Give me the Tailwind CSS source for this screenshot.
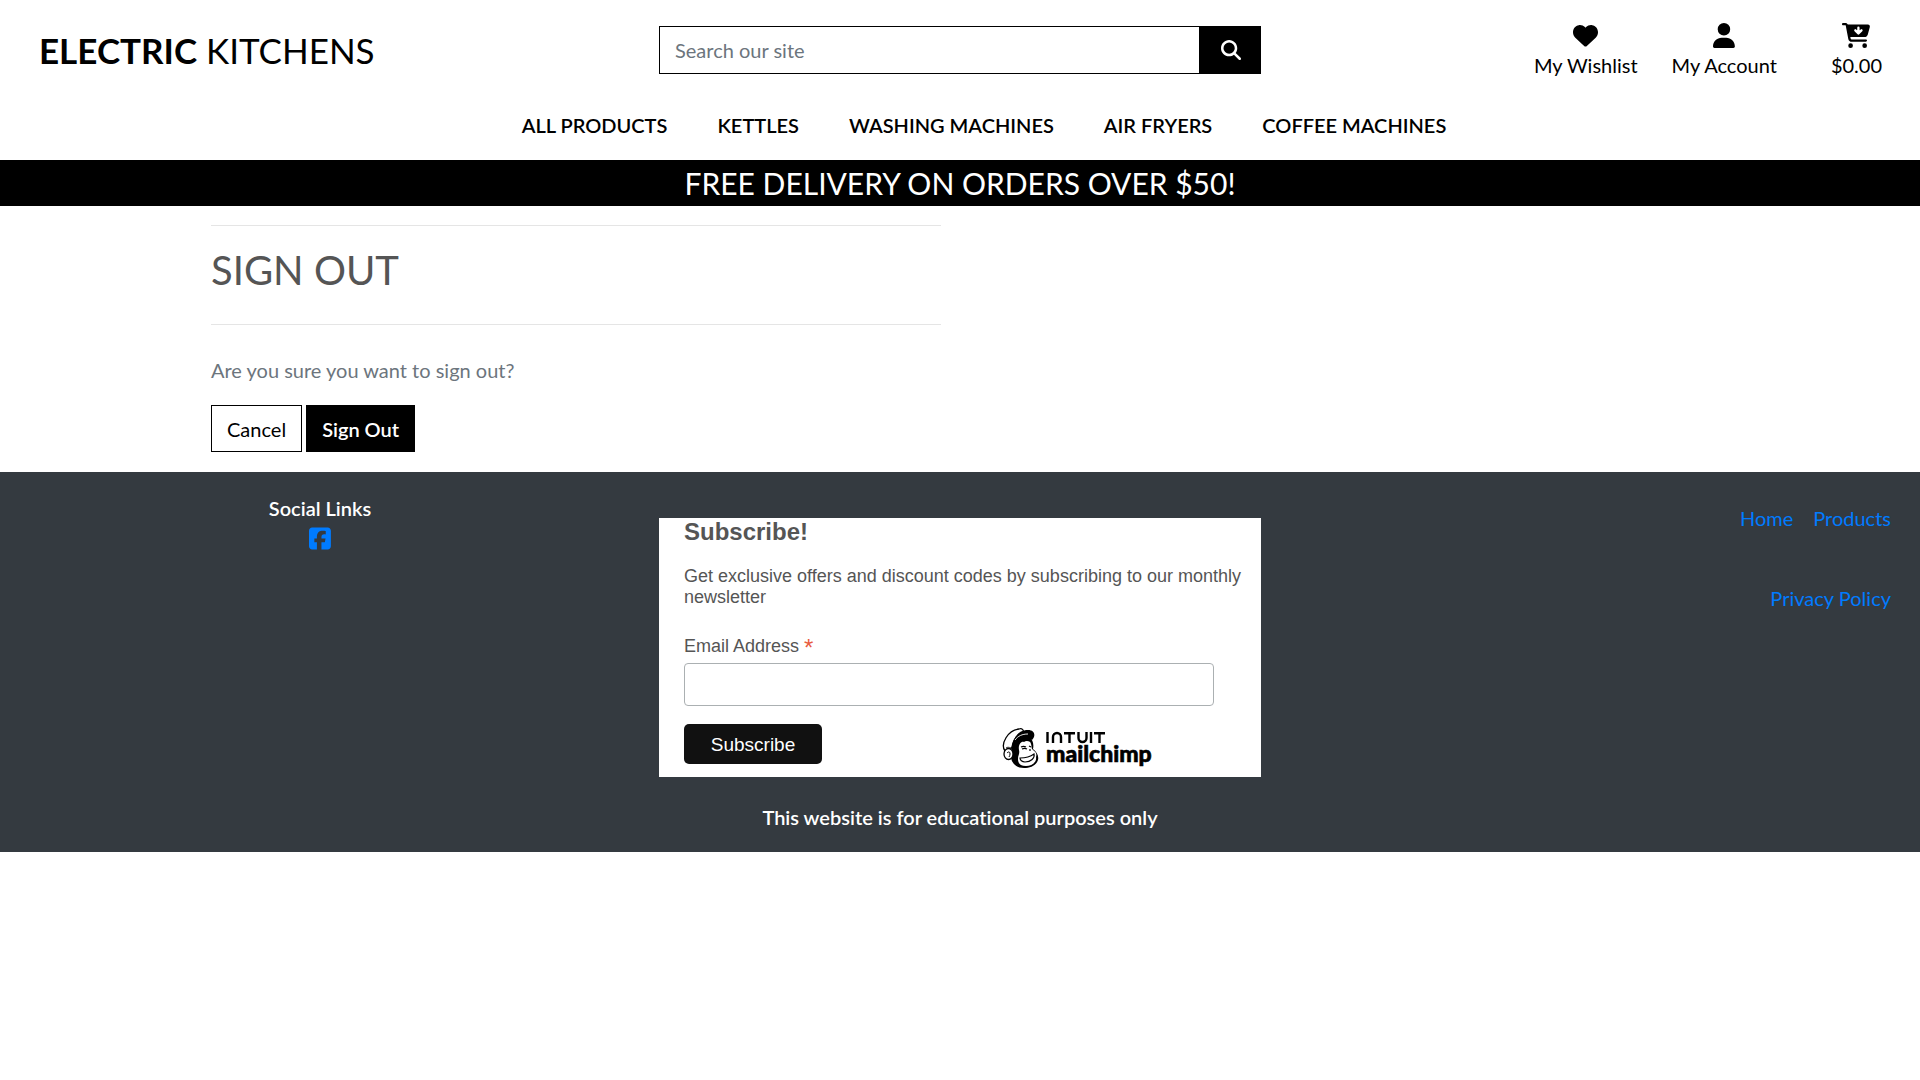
<!DOCTYPE html>
<html lang="en">
<head>
<meta charset="utf-8">
<meta name="viewport" content="width=device-width, initial-scale=1">
<title>Electric Kitchens</title>
<script src="https://cdn.jsdelivr.net/npm/@tailwindcss/browser@4"></script>
</head>
<body class="bg-white font-['Lato',sans-serif] text-[20px] leading-[30px] text-black [font-variant-ligatures:none]">

<header>
  <div class="grid grid-cols-3 h-[100px]">
    <div class="flex items-center pl-[39px]">
      <a href="#" class="text-[35px] leading-[42px]"><span class="font-bold">ELECTRIC</span> KITCHENS</a>
    </div>
    <form class="flex items-center px-[19px]" onsubmit="return false">
      <input type="text" aria-label="Search our site" placeholder="Search our site" class="h-12 min-w-0 flex-1 border border-black px-[15px] placeholder:text-[#6c757d] outline-none">
      <button aria-label="Search" class="flex h-12 w-[61px] items-center justify-center bg-black text-white">
        <svg class="size-5" viewBox="0 0 512 512" fill="currentColor"><path d="M416 208c0 45.9-14.9 88.3-40 122.7L502.6 457.4c12.5 12.5 12.5 32.8 0 45.3s-32.8 12.5-45.3 0L330.7 376c-34.4 25.2-76.8 40-122.7 40C93.1 416 0 322.9 0 208S93.1 0 208 0S416 93.1 416 208zM208 352a144 144 0 1 0 0-288 144 144 0 1 0 0 288z"/></svg>
      </button>
    </form>
    <nav aria-label="Account" class="flex items-center justify-end gap-[34px] pr-[38px] pt-[3px]">
      <a href="#" class="flex flex-col items-center gap-[2px]">
        <svg class="h-[25px]" viewBox="0 0 512 512"><path d="M47.6 300.4L228.3 469.1c7.5 7 17.4 10.9 27.7 10.9s20.2-3.9 27.7-10.9L464.4 300.4c30.4-28.3 47.6-68 47.6-109.5v-5.8c0-69.9-50.5-129.5-119.4-141C347 36.5 300.6 51.4 268 84L256 96 244 84c-32.6-32.6-79-47.5-124.6-39.9C50.5 55.6 0 115.2 0 185.1v5.8c0 41.5 17.2 81.2 47.6 109.5z"/></svg>
        My Wishlist</a>
      <a href="#" class="flex flex-col items-center gap-[2px]">
        <svg class="h-[25px]" viewBox="0 0 448 512"><path d="M224 256A128 128 0 1 0 224 0a128 128 0 1 0 0 256zm-45.7 48C79.8 304 0 383.8 0 482.3C0 498.7 13.3 512 29.7 512H418.3c16.4 0 29.7-13.3 29.7-29.7C448 383.8 368.2 304 269.7 304H178.3z"/></svg>
        My Account</a>
      <a href="#" class="flex flex-col items-center gap-[2px] pl-5">
        <svg class="h-[25px]" viewBox="0 0 576 512"><path d="M24 0C10.7 0 0 10.7 0 24S10.7 48 24 48H69.5c3.8 0 7.1 2.7 7.9 6.5l51.6 271c6.5 34 36.2 58.5 70.7 58.5H488c13.3 0 24-10.7 24-24s-10.7-24-24-24H199.7c-11.5 0-21.4-8.2-23.6-19.5L170.7 288H459.2c32.6 0 61.1-21.8 69.5-53.3l41-152.3C576.6 57 557.4 32 531.1 32h-411C111 12.8 91.6 0 69.5 0H24zM176 512a48 48 0 1 0 0-96 48 48 0 1 0 0 96zm336-48a48 48 0 1 0-96 0 48 48 0 1 0 96 0z"/><path d="M336 95v110M273 150l63 63 63-63" fill="none" stroke="#fff" stroke-width="48" stroke-linecap="round" stroke-linejoin="round"/></svg>
        $0.00</a>
    </nav>
  </div>
  <nav aria-label="Products" class="flex h-[60px] items-start justify-center gap-[50px] pl-12 pt-[10px] font-semibold">
    <a href="#">ALL PRODUCTS</a>
    <a href="#">KETTLES</a>
    <a href="#">WASHING MACHINES</a>
    <a href="#">AIR FRYERS</a>
    <a href="#">COFFEE MACHINES</a>
  </nav>
  <p class="bg-black py-1 text-center text-[30px] leading-[38px] text-white">FREE DELIVERY ON ORDERS OVER $50!</p>
</header>

<main class="px-[10%] pb-5">
  <div class="w-1/2 px-[19px]">
    <h1 class="mt-[19px] border-y border-[#e5e5e5] pb-[30px] pt-5 text-[40px] leading-[48px] text-[#555]">SIGN OUT</h1>
    <p class="mt-[30px] text-[#6c757d]">Are you sure you want to sign out?</p>
    <form class="mt-5 flex gap-1 leading-[29px]" onsubmit="return false">
      <a href="#" class="border border-black px-[15px] pb-[7px] pt-[9px]">Cancel</a>
      <button class="border border-black bg-black px-[15px] pb-[7px] pt-[9px] font-semibold text-white">Sign Out</button>
    </form>
  </div>
</main>

<footer class="bg-[#343a40] pb-5 pt-[21px] text-white">
  <div class="grid grid-cols-3">
    <div class="flex flex-col items-center font-semibold">
      <p>Social Links</p>
      <a href="#" aria-label="Facebook" class="text-[#007bff]"><svg class="mt-[3px] h-[25px]" viewBox="0 0 448 512" fill="currentColor"><path d="M64 32C28.7 32 0 60.7 0 96V416c0 35.3 28.7 64 64 64h98.2V334.2H109.4V256h52.8V222.3c0-87.1 39.4-127.5 125-127.5c16.2 0 44.2 3.2 55.7 6.4V172c-6-.6-16.5-1-29.6-1c-42 0-58.2 15.9-58.2 57.2V256h83.6l-14.4 78.2H255V480H384c35.3 0 64-28.7 64-64V96c0-35.3-28.7-64-64-64H64z"/></svg></a>
    </div>
    <div class="px-[19px] pt-[25px]">
      <form class="bg-white pb-[9px] pl-[25px] pr-[19px] font-['Liberation_Sans',Arial,sans-serif] text-[18px] leading-[21px] text-[#555]" onsubmit="return false">
        <h2 class="text-[24px] font-bold leading-[28px]">Subscribe!</h2>
        <p class="mt-5">Get exclusive offers and discount codes by subscribing to our monthly newsletter</p>
        <label for="email" class="mt-7 block">Email Address <span class="text-[24px] leading-none align-[-4px] text-[#e85c41]">*</span></label>
        <input id="email" type="email" class="mt-[3px] block h-[43px] w-[95%] rounded-[4px] border border-[#abb0b2] px-2 outline-none">
        <div class="mt-[18px] flex items-start">
          <button class="h-10 w-[138px] rounded-[5px] bg-[#111] text-[19px] text-white">Subscribe</button>
          <a href="#" aria-label="Intuit Mailchimp" class="ml-[180px] pt-1">
            <svg class="h-10 w-[150px]" viewBox="0 0 150 40">
              <path d="M10 18C11 10 20 8 27 9c4 3 5 7 4 12 4 3 6 7 5 11-2 6-8 8-14 8-8 0-12-5-13-10z"/>
              <path d="M3 23C-2 16 6 2 17 1c3-1 5 1 4 3C15 7 11 12 10 19c-1 3-4 5-7 4z" fill="#fff" stroke="#000" stroke-width="1.3"/>
              <path d="M4 20c1-1 3-1 5 0" fill="none" stroke="#000" stroke-width=".8"/>
              <path d="M10 19C11 10 16 2 26 2c7 0 8 6 4 10-6-3-13-1-17 3z"/>
              <path d="M13 12c3-4 7-6 13-6" fill="none" stroke="#fff" stroke-width=".9"/>
              <path d="M17 22c-1-5 2-9 5-8 2-2 7-1 7 2 1 3 0 4 2 6 3 2 4 4 3 7 1 5-4 9-10 9-6 0-8-3-8-7 0-4 2-5 1-9z" fill="#fff"/>
              <path d="M18 30c5 0 10-1 14-4 1 4-3 8-9 8-3 0-5-2-5-4zM19 19c2-1 3-1 5 0M27 18l2 1M20 21c2-1 3-1 5 0M28 21v2" fill="none" stroke="#000" stroke-width="1.2"/>
              <ellipse cx="6.5" cy="26" rx="4.5" ry="5.5" fill="#fff" stroke="#000" stroke-width="1.3"/>
              <path d="M5 25c3-3 4 1 2 4" fill="none" stroke="#000"/>
              <path d="M45.5 4v11M51 15V9a4 4 0 0 1 8 0v6M62 5.200h11M67.500 5.200V15M76.500 4v6a4 4 0 0 0 8 0V4M89 4v11M92 5.200h11M97.500 5.200V15" fill="none" stroke="#000" stroke-width="2.400"/>
              <text x="44" y="34" font-family="Lato, sans-serif" font-weight="900" font-size="23" stroke="#000" stroke-width=".6">mailchimp</text>
            </svg>
          </a>
        </div>
      </form>
    </div>
    <nav aria-label="Footer" class="flex flex-col items-end gap-[50px] pr-[29px] pt-[10px] text-[#007bff]">
      <div class="flex gap-5"><a href="#">Home</a><a href="#">Products</a></div>
      <a href="#">Privacy Policy</a>
    </nav>
  </div>
  <p class="mt-[25px] text-center font-semibold">This website is for educational purposes only</p>
</footer>
</body>
</html>
